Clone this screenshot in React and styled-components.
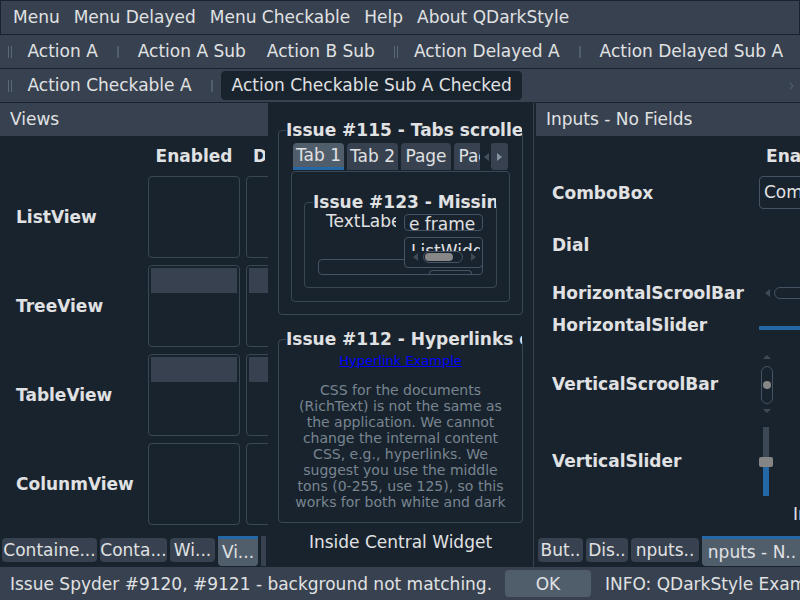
import React from 'react';
import styled, { createGlobalStyle, css } from 'styled-components';

const BLUE = '#2468A8';
const FRAME = '#3A4854';
const EDGE = '#455364';
const PANEL = '#37414F';
const ACTIVE = '#505E6C';

const GlobalStyle = createGlobalStyle`
  * { box-sizing: border-box; }
  html, body { margin: 0; padding: 0; background: #19232D; }
  body {
    font-family: "DejaVu Sans", "Noto Sans", sans-serif;
    font-size: 17px;
    color: #E0E1E3;
    overflow: hidden;
  }
`;

const Window = styled.div`
  width: 800px;
  height: 600px;
  display: flex;
  flex-direction: column;
  overflow: hidden;
  background: #19232D;
`;

/* ---------- menu + toolbars ---------- */
const MenuBar = styled.nav`
  height: 35px;
  flex: none;
  display: flex;
  align-items: center;
  padding-left: 5px;
  background: ${PANEL};
  border: 1px solid #19232D;
`;
const MenuItem = styled.span`
  padding: 0 7px;
  line-height: 33px;
  white-space: nowrap;
`;

const ToolBar = styled.div`
  height: 34px;
  flex: none;
  display: flex;
  align-items: center;
  padding-left: 8px;
  background: ${PANEL};
  border-bottom: 1px solid #19232D;
  white-space: nowrap;
`;
const Handle = styled.span`
  flex: none;
  width: 4px;
  height: 12px;
  margin: 0 5px 0 ${p => p.$gap || 0}px;
  border-left: 1px solid #5B6876;
  border-right: 1px solid #5B6876;
`;
const ToolSep = styled.span`
  flex: none;
  width: 2px;
  height: 12px;
  margin: 0 8px 0 9px;
  background: #505D6A;
`;
const ToolButton = styled.span`
  flex: none;
  height: 29px;
  line-height: 27px;
  padding: 0 9.5px;
  border: 1px solid transparent;
  border-radius: 4px;
  ${p => p.$checked && css`
    background: #19232D;
    border-color: #19232D;
  `}
`;
const Extension = styled.svg`
  display: block;
  flex: none;
  margin-left: auto;
  margin-right: 6px;
`;

/* ---------- main area ---------- */
const Main = styled.div`
  flex: 1;
  min-height: 0;
  display: flex;
`;
const Dock = styled.section`
  flex: none;
  width: ${p => p.$w}px;
  display: flex;
  flex-direction: column;
  overflow: hidden;
  ${p => p.$edge && css`
    border-left: 1px solid ${PANEL};
    padding-left: 2px;
  `}
`;
const DockTitle = styled.header`
  height: 33px;
  flex: none;
  background: ${PANEL};
  padding-left: 10px;
  line-height: 33px;
  white-space: nowrap;
`;
const DockBody = styled.div`
  flex: 1;
  min-height: 0;
  overflow: hidden;
`;
const DockTabs = styled.div`
  flex: none;
  height: 31px;
  display: flex;
  gap: 3px;
  padding-left: 2px;
  overflow: hidden;
`;
const DockTab = styled.div`
  flex: none;
  width: ${p => p.$w}px;
  height: 24px;
  margin-top: 2px;
  background: ${PANEL};
  border-radius: 4px;
  line-height: 24px;
  text-align: center;
  white-space: nowrap;
  overflow: hidden;
  ${p => p.$active && css`
    height: 30px;
    margin-top: 0;
    background: ${ACTIVE};
    border-top: 3px solid ${BLUE};
    border-radius: 0 0 4px 4px;
    line-height: 27px;
  `}
  ${p => p.$stub && css`
    height: 30px;
    margin-top: 0;
    border-radius: 0;
  `}
`;

const FormGrid = styled.div`
  display: grid;
  width: max-content;
  grid-template-columns: ${p => p.$cols};
  grid-template-rows: ${p => p.$rows};
  column-gap: ${p => p.$cgap || 0}px;
  row-gap: ${p => p.$rgap || 0}px;
  padding: 10px 0 0 16px;
  align-items: center;
`;
const ColHeader = styled.div`
  align-self: start;
  font-weight: bold;
  line-height: 20px;
  text-align: center;
  white-space: nowrap;
  overflow: hidden;
  grid-column: ${p => p.$col};
  grid-row: 1;
  ${p => p.$clip && css`
    text-align: left;
    padding-left: 7px;
    width: 19px;
  `}
`;
const FormLabel = styled.div`
  grid-column: 1;
  grid-row: ${p => p.$row};
  font-weight: bold;
  white-space: nowrap;
`;
const Cell = styled.div`
  grid-column: ${p => p.$col || 2};
  grid-row: ${p => p.$row};
  min-width: 0;
`;
const ViewBox = styled.div`
  height: 82px;
  border: 1px solid ${FRAME};
  border-radius: 4px;
  padding: 2px;
`;
const ViewHeader = styled.div`
  height: 25px;
  background: ${PANEL};
`;

/* ---------- central ---------- */
const Central = styled.main`
  flex: 1;
  min-width: 0;
  display: flex;
  flex-direction: column;
  padding: 17px 10px 0;
  overflow: hidden;
`;
const GroupBox = styled.fieldset`
  margin: ${p => p.$mt || 0}px 0 0;
  padding: 0 0 12px ${p => p.$pl || 7}px;
  min-width: 0;
  min-inline-size: 0;
  border: 1px solid ${FRAME};
  border-radius: 4px;
`;
const GroupTitle = styled.legend`
  width: 100%;
  padding: 0;
  font-weight: bold;
  line-height: 20px;
  white-space: nowrap;
  overflow: hidden;
`;
const TabWidget = styled.div`
  margin: 3px 12px 0 5px;
`;
const TabBar = styled.div`
  display: flex;
  height: 28px;
  padding-left: 2px;
`;
const TabStrip = styled.div`
  width: 187px;
  display: flex;
  gap: 3px;
  overflow: hidden;
`;
const Tab = styled.div`
  flex: none;
  min-width: 50px;
  height: 27px;
  padding: 0 3px;
  text-align: center;
  line-height: 27px;
  background: ${PANEL};
  border-radius: 4px 4px 0 0;
  white-space: nowrap;
  ${p => p.$active && css`
    background: ${ACTIVE};
    border-bottom: 3px solid ${BLUE};
    line-height: 24px;
  `}
`;
const TabScroll = styled.div`
  display: flex;
  align-items: flex-start;
  gap: 2px;
  padding-left: 3px;
`;
const ScrollBtn = styled.div`
  width: ${p => p.$w}px;
  height: 27px;
  display: flex;
  align-items: center;
  justify-content: center;
  border-radius: 3px;
  ${p => p.$bg && css`background: ${PANEL};`}
`;
const TabPane = styled.div`
  height: 131px;
  border: 1px solid ${FRAME};
  border-radius: 4px;
  padding: 20px 12px 0;
`;
const MiniGrid = styled.div`
  display: grid;
  grid-template-columns: 86px 79px;
  grid-template-rows: 17px 6px 22px 9px 7px;
  margin: 2px 0 0 5px;
`;
const MiniLabel = styled.div`
  grid-row: 1;
  grid-column: 1;
  padding-left: 8px;
  margin-right: 8px;
  overflow: hidden;
  white-space: nowrap;
  line-height: 15px;
`;
const MiniEdit = styled.div`
  grid-row: 1;
  grid-column: 2;
  border: 1px solid ${EDGE};
  border-radius: 4px;
  padding: 0 4px;
  line-height: 19px;
  overflow: hidden;
  white-space: nowrap;
`;
const WideBox = styled.div`
  grid-row: 4 / 6;
  grid-column: 1 / 3;
  border: 1px solid ${EDGE};
  border-radius: 4px;
`;
const Bump = styled.div`
  grid-row: 5;
  grid-column: 2;
  align-self: end;
  width: 43px;
  height: 5px;
  margin-left: 25px;
  border: 1px solid ${EDGE};
  border-bottom: none;
  border-radius: 4px 4px 0 0;
`;
const ListWidget = styled.div`
  grid-row: 3 / 5;
  grid-column: 2;
  background: #19232D;
  border: 1px solid ${EDGE};
  border-radius: 4px;
  padding: 3px 2px 0;
  overflow: hidden;
`;
const ListText = styled.div`
  height: 10px;
  line-height: 20px;
  padding-left: 4px;
  overflow: hidden;
  white-space: nowrap;
`;
const MiniScroll = styled.div`
  display: flex;
  align-items: center;
  height: 12px;
  padding-left: 6px;
`;
const Groove = styled.div`
  flex: none;
  width: ${p => p.$w}px;
  height: ${p => p.$h}px;
  border: 1px solid ${EDGE};
  border-radius: 6px;
  display: flex;
  align-items: center;
  justify-content: ${p => p.$center ? 'center' : 'flex-start'};
  padding-left: ${p => p.$center ? 0 : 1}px;
  margin: ${p => p.$m || '0'};
`;
const Thumb = styled.div`
  flex: none;
  width: ${p => p.$w}px;
  height: 8px;
  border-radius: 4px;
  background: #878787;
`;
const GroupBody = styled.div`
  margin-right: 7px;
  padding-top: 4px;
  text-align: center;
`;
const Hyperlink = styled.a`
  display: block;
  font-size: 13px;
  line-height: 16px;
  color: #0000FF;
  text-decoration: underline;
`;
const Paragraph = styled.p`
  margin: 13px 0 0;
  font-size: 14px;
  line-height: 16px;
  color: #788591;
  white-space: nowrap;
`;
const CentralLabel = styled.div`
  margin-top: 9px;
  line-height: 20px;
  text-align: center;
  white-space: nowrap;
`;

/* ---------- inputs ---------- */
const Combo = styled.div`
  height: 33px;
  width: 120px;
  border: 1px solid ${EDGE};
  border-radius: 4px;
  padding-left: 4px;
  line-height: 31px;
  white-space: nowrap;
  overflow: hidden;
`;
const HScroll = styled.div`
  display: flex;
  align-items: center;
  margin-left: 6px;
`;
const HSlider = styled.div`
  width: 100px;
  height: 4px;
  margin-top: 5px;
  background: ${BLUE};
`;
const VScroll = styled.div`
  width: 12px;
  margin-left: 2px;
  display: flex;
  flex-direction: column;
  align-items: center;
`;
const VSlider = styled.div`
  width: 14px;
  display: flex;
  flex-direction: column;
  align-items: center;
`;
const SliderPart = styled.div`
  width: ${p => p.$w}px;
  height: ${p => p.$h}px;
  background: ${p => p.$c};
  border-radius: ${p => p.$r || 0}px;
`;
const PlainText = styled.div`
  padding-left: 34px;
  white-space: nowrap;
`;

/* ---------- status ---------- */
const StatusBar = styled.footer`
  height: 33px;
  flex: none;
  display: flex;
  align-items: center;
  background: ${PANEL};
  white-space: nowrap;
  overflow: hidden;
`;
const StatusMsg = styled.span`
  flex: none;
  width: 505px;
  padding-left: 10px;
  overflow: hidden;
`;
const StatusButton = styled.button`
  flex: none;
  width: 86px;
  height: 27px;
  margin-right: 14px;
  padding: 0;
  border: none;
  border-radius: 4px;
  background: ${ACTIVE};
  color: #E0E1E3;
  font: inherit;
`;
const StatusInfo = styled.span`
  flex: none;
`;

const ArrowSvg = styled.svg`
  display: block;
  flex: none;
`;

function Arrow({ dir, color, m }) {
  const horiz = dir === 'left' || dir === 'right';
  const w = horiz ? 5 : 8;
  const h = horiz ? 8 : 4;
  const pts = {
    left: '5,0 0,4 5,8',
    right: '0,0 5,4 0,8',
    up: '0,4 4,0 8,4',
    down: '0,0 8,0 4,4',
  }[dir];
  return (
    <ArrowSvg width={w} height={h} viewBox={`0 0 ${w} ${h}`} style={m ? { margin: m } : undefined}>
      <polygon points={pts} fill={color} />
    </ArrowSvg>
  );
}

const views = [
  { name: 'ListView', header: false },
  { name: 'TreeView', header: true },
  { name: 'TableView', header: true },
  { name: 'ColunmView', header: false },
];

export default function App() {
  return (
    <>
      <GlobalStyle />
      <Window>
        <MenuBar>
          {['Menu', 'Menu Delayed', 'Menu Checkable', 'Help', 'About QDarkStyle'].map(m => (
            <MenuItem key={m}>{m}</MenuItem>
          ))}
        </MenuBar>
        <ToolBar>
          <Handle />
          <ToolButton>Action A</ToolButton>
          <ToolSep />
          <ToolButton>Action A Sub</ToolButton>
          <ToolButton>Action B Sub</ToolButton>
          <Handle $gap={9} />
          <ToolButton>Action Delayed A</ToolButton>
          <ToolSep />
          <ToolButton>Action Delayed Sub A</ToolButton>
        </ToolBar>
        <ToolBar>
          <Handle />
          <ToolButton>Action Checkable A</ToolButton>
          <ToolSep />
          <ToolButton $checked>Action Checkable Sub A Checked</ToolButton>
          <Extension width="5" height="8" viewBox="0 0 5 8">
            <polyline points="1,1 4,4 1,7" fill="none" stroke="#505D6A" strokeWidth="1.2" />
          </Extension>
        </ToolBar>

        <Main>
          <Dock $w={268}>
            <DockTitle>Views</DockTitle>
            <DockBody>
              <FormGrid $cols="126px 92px 92px" $rows="23px repeat(4, 82px)" $cgap={6} $rgap={7}>
                <ColHeader $col={2}>Enabled</ColHeader>
                <ColHeader $col={3} $clip>Disabled</ColHeader>
                {views.map((v, i) => (
                  <React.Fragment key={v.name}>
                    <FormLabel $row={i + 2}>{v.name}</FormLabel>
                    <Cell $col={2} $row={i + 2}>
                      <ViewBox>{v.header && <ViewHeader />}</ViewBox>
                    </Cell>
                    <Cell $col={3} $row={i + 2}>
                      <ViewBox>{v.header && <ViewHeader />}</ViewBox>
                    </Cell>
                  </React.Fragment>
                ))}
              </FormGrid>
            </DockBody>
            <DockTabs>
              <DockTab $w={95}>Containe...</DockTab>
              <DockTab $w={67}>Conta...</DockTab>
              <DockTab $w={45}>Wi...</DockTab>
              <DockTab $w={40} $active>Vi...</DockTab>
              <DockTab $w={5} $stub />
            </DockTabs>
          </Dock>

          <Central>
            <GroupBox>
              <GroupTitle>Issue #115 - Tabs scrolled</GroupTitle>
              <TabWidget>
                <TabBar>
                  <TabStrip>
                    <Tab $active>Tab 1</Tab>
                    <Tab>Tab 2</Tab>
                    <Tab>Page</Tab>
                    <Tab>Page</Tab>
                  </TabStrip>
                  <TabScroll>
                    <ScrollBtn $w={6}><Arrow dir="left" color="#45515E" /></ScrollBtn>
                    <ScrollBtn $w={17} $bg><Arrow dir="right" color="#8793A0" /></ScrollBtn>
                  </TabScroll>
                </TabBar>
                <TabPane>
                  <GroupBox $pl={8}>
                    <GroupTitle>Issue #123 - Missing borders</GroupTitle>
                    <MiniGrid>
                      <MiniLabel>TextLabel</MiniLabel>
                      <MiniEdit>e frame</MiniEdit>
                      <WideBox />
                      <Bump />
                      <ListWidget>
                        <ListText>ListWidget</ListText>
                        <MiniScroll>
                          <Arrow dir="left" color="#3E4A57" />
                          <Groove $w={40} $h={12} $m="0 8px 0 5px">
                            <Thumb $w={28} />
                          </Groove>
                          <Arrow dir="right" color="#3E4A57" />
                        </MiniScroll>
                      </ListWidget>
                    </MiniGrid>
                  </GroupBox>
                </TabPane>
              </TabWidget>
            </GroupBox>

            <GroupBox $mt={14}>
              <GroupTitle>Issue #112 - Hyperlinks color</GroupTitle>
              <GroupBody>
                <Hyperlink href="#">Hyperlink Example</Hyperlink>
                <Paragraph>
                  CSS for the documents<br />
                  (RichText) is not the same as<br />
                  the application. We cannot<br />
                  change the internal content<br />
                  CSS, e.g., hyperlinks. We<br />
                  suggest you use the middle<br />
                  tons (0-255, use 125), so this<br />
                  works for both white and dark
                </Paragraph>
              </GroupBody>
            </GroupBox>
            <CentralLabel>Inside Central Widget</CentralLabel>
          </Central>

          <Dock $w={267} $edge>
            <DockTitle>Inputs - No Fields</DockTitle>
            <DockBody>
              <FormGrid $cols="207px 91px" $rows="30px 33px 72px 24px 40px 78px 76px 30px">
                <ColHeader $col={2}>Enabled</ColHeader>
                <FormLabel $row={2}>ComboBox</FormLabel>
                <Cell $row={2}><Combo>ComboBox</Combo></Cell>
                <FormLabel $row={3}>Dial</FormLabel>
                <FormLabel $row={4}>HorizontalScroolBar</FormLabel>
                <Cell $row={4}>
                  <HScroll>
                    <Arrow dir="left" color="#3E4A57" m="0 4px 0 0" />
                    <Groove $w={100} $h={12} />
                  </HScroll>
                </Cell>
                <FormLabel $row={5}>HorizontalSlider</FormLabel>
                <Cell $row={5}><HSlider /></Cell>
                <FormLabel $row={6}>VerticalScroolBar</FormLabel>
                <Cell $row={6}>
                  <VScroll>
                    <Arrow dir="up" color="#3E4A57" m="0 0 7px" />
                    <Groove $w={12} $h={38} $center>
                      <Thumb $w={8} />
                    </Groove>
                    <Arrow dir="down" color="#3E4A57" m="5px 0 0" />
                  </VScroll>
                </Cell>
                <FormLabel $row={7}>VerticalSlider</FormLabel>
                <Cell $row={7}>
                  <VSlider>
                    <SliderPart $w={6} $h={30} $c="#3C4856" />
                    <SliderPart $w={14} $h={10} $c="#858585" $r={2} />
                    <SliderPart $w={6} $h={29} $c={BLUE} />
                  </VSlider>
                </Cell>
                <Cell $row={8}><PlainText>Input</PlainText></Cell>
              </FormGrid>
            </DockBody>
            <DockTabs>
              <DockTab $w={45}>But..</DockTab>
              <DockTab $w={42}>Dis..</DockTab>
              <DockTab $w={68}>nputs..</DockTab>
              <DockTab $w={100} $active>nputs - N..</DockTab>
            </DockTabs>
          </Dock>
        </Main>

        <StatusBar>
          <StatusMsg>Issue Spyder #9120, #9121 - background not matching.</StatusMsg>
          <StatusButton>OK</StatusButton>
          <StatusInfo>INFO: QDarkStyle Example</StatusInfo>
        </StatusBar>
      </Window>
    </>
  );
}
